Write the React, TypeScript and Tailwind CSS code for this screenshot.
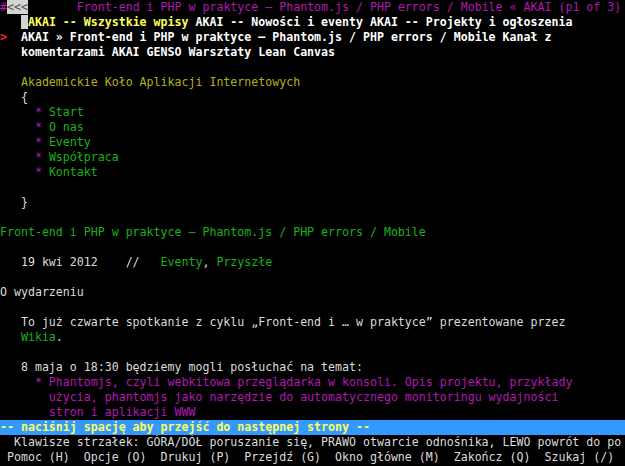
import React from "react";

const MAG = "text-[#b218b2]";
const GRN = "text-[#18b218]";
const OLV = "text-[#b2b218]";
const WHT = "text-[#dcdcdc]";

function Line({ children, className = "" }: { children?: React.ReactNode; className?: string }) {
  return (
    <div className={`h-[15px] leading-[15px] whitespace-pre overflow-hidden ${className}`}>
      {children}
      {" "}
    </div>
  );
}

export default function App() {
  return (
    <div
      className={`w-[625px] h-[466px] bg-black overflow-hidden text-[11.6px] ${WHT}`}
      style={{ fontFamily: '"DejaVu Sans Mono", "Liberation Mono", monospace' }}
    >
      <Line>
        <span className={MAG}>#</span>
        <span className="bg-[#d4d4d4] text-[#505050]">{"<<<"}</span>
        <span className={MAG}>{"       Front-end i PHP w praktyce – Phantom.js / PHP errors / Mobile « AKAI (p1 of 3)"}</span>
      </Line>
      <Line className="font-bold">
        {"   "}
        <span className="bg-[#d4d4d4]">{" "}</span>
        <span className="text-[#ffff54]">AKAI -- Wszystkie wpisy</span>
        <span className="text-white"> AKAI -- Nowości i eventy AKAI -- Projekty i ogłoszenia</span>
      </Line>
      <Line className="font-bold">
        <span className="text-[#ff2020]">{">"}</span>
        <span className="text-white">{"  AKAI » Front-end i PHP w praktyce – Phantom.js / PHP errors / Mobile Kanał z"}</span>
      </Line>
      <Line className="font-bold">
        <span className="text-white">{"   komentarzami AKAI GENSO Warsztaty Lean Canvas"}</span>
      </Line>
      <Line />
      <Line>
        <span className={OLV}>{"   Akademickie Koło Aplikacji Internetowych"}</span>
      </Line>
      <Line>{"   {"}</Line>
      {["Start", "O nas", "Eventy", "Współpraca", "Kontakt"].map((t) => (
        <Line key={t}>
          {"     "}
          <span className={MAG}>*</span> <span className={GRN}>{t}</span>
        </Line>
      ))}
      <Line />
      <Line>{"   }"}</Line>
      <Line />
      <Line>
        <span className={GRN}>Front-end i PHP w praktyce – Phantom.js / PHP errors / Mobile</span>
      </Line>
      <Line />
      <Line>
        {"   19 kwi 2012    //   "}
        <span className={GRN}>Eventy</span>, <span className={GRN}>Przyszłe</span>
      </Line>
      <Line />
      <Line>O wydarzeniu</Line>
      <Line />
      <Line>{"   To już czwarte spotkanie z cyklu „Front-end i … w praktyce” prezentowane przez"}</Line>
      <Line>
        {"   "}
        <span className={GRN}>Wikia</span>.
      </Line>
      <Line />
      <Line>{"   8 maja o 18:30 będziemy mogli posłuchać na temat:"}</Line>
      <Line>
        {"     "}
        <span className={MAG}>* Phantomjs, czyli webkitowa przeglądarka w konsoli. Opis projektu, przykłady</span>
      </Line>
      <Line>
        <span className={MAG}>{"       użycia, phantomjs jako narzędzie do automatycznego monitoringu wydajności"}</span>
      </Line>
      <Line>
        <span className={MAG}>{"       stron i aplikacji WWW"}</span>
      </Line>
      <Line className="bg-[#3399ff] font-bold text-[#ffff54]">
        -- naciśnij spację aby przejść do następnej strony --
      </Line>
      <Line>{"  Klawisze strzałek: GÓRA/DÓŁ poruszanie się, PRAWO otwarcie odnośnika, LEWO powrót do po"}</Line>
      <Line>{" Pomoc (H)  Opcje (O)  Drukuj (P)  Przejdź (G)  Okno główne (M)  Zakończ (Q)  Szukaj (/)"}</Line>
    </div>
  );
}
